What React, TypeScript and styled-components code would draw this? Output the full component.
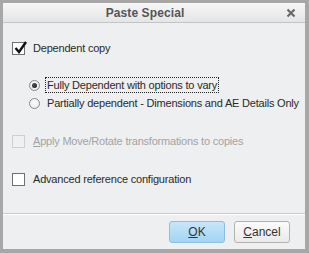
import React, { useState } from 'react'
import styled, { createGlobalStyle, css } from 'styled-components'

const GlobalStyle = createGlobalStyle`
  html, body {
    margin: 0;
    padding: 0;
    background: #a9a9a9;
  }
  * {
    box-sizing: border-box;
  }
`;

const Frame = styled.div`
  width: 309px;
  height: 253px;
  border: 3px solid #a7a7a7;
  border-right-width: 4px;
  border-bottom-width: 4px;
  background: #eeeff0;
  display: flex;
  flex-direction: column;
  font-family: "Liberation Sans", Arial, sans-serif;
  font-size: 11px;
  letter-spacing: -0.2px;
  color: #222;
`;

const TitleBar = styled.div`
  height: 20px;
  flex: none;
  display: flex;
  align-items: center;
  justify-content: center;
  padding-right: 18px;
  position: relative;
  background: linear-gradient(#f6f6f7, #e4e5e6);
  border-bottom: 1px solid #c3c4c6;
`;

const Title = styled.div`
  font-weight: bold;
  font-size: 12px;
  letter-spacing: 0.1px;
  color: #555555;
`;

const CloseButton = styled.div`
  position: absolute;
  right: 9px;
  top: 5px;
  width: 10px;
  height: 10px;
  display: flex;
`;

const Body = styled.div`
  flex: 1;
  display: flex;
  flex-direction: column;
  padding: 16px 0 0 9px;
`;

const Row = styled.label<{ $indent?: number; $gap?: number; $disabled?: boolean }>`
  display: flex;
  align-items: center;
  height: 18px;
  margin-left: ${(p) => p.$indent || 0}px;
  margin-bottom: ${(p) => p.$gap || 0}px;
  color: ${(p) => (p.$disabled ? '#a3a3a3' : '#2a2a2a')};
  cursor: default;
`;

const Box = styled.span<{ $disabled?: boolean }>`
  width: 13px;
  height: 13px;
  flex: none;
  border: 1px solid ${(p) => (p.$disabled ? '#cfcfcf' : '#707070')};
  background: ${(p) => (p.$disabled ? '#f0f0f0' : '#ffffff')};
  margin-right: 7px;
  position: relative;
  display: inline-block;
`;

const Tick = styled.svg`
  position: absolute;
  left: 0px;
  top: -3px;
`;

const Radio = styled.span<{ $on?: boolean }>`
  width: 11px;
  height: 11px;
  flex: none;
  border-radius: 50%;
  border: 1px solid #8a8a8a;
  background: radial-gradient(circle at 50% 40%, #ffffff, #e2e2e2);
  margin-right: 6px;
  display: flex;
  align-items: center;
  justify-content: center;
  &::after {
    content: '';
    width: 5px;
    height: 5px;
    border-radius: 50%;
    background: radial-gradient(circle at 40% 35%, #555, #111);
    display: ${(p) => (p.$on ? 'block' : 'none')};
  }
`;

const Text = styled.span<{ $focus?: boolean }>`
  white-space: nowrap;
  padding: 1px 1px;
  ${(p) =>
    p.$focus &&
    css`
      outline: 1px dotted #222;
      outline-offset: 0px;
    `}
`;

const Mnemonic = styled.span`
  text-decoration: underline;
`;

const Footer = styled.div`
  flex: none;
  height: 36px;
  border-top: 1px solid #c9cacc;
  box-shadow: inset 0 1px 0 #ffffff;
  display: flex;
  justify-content: flex-end;
  align-items: center;
  gap: 9px;
  padding-right: 15px;
`;

const Button = styled.button<{ $primary?: boolean }>`
  width: 56px;
  height: 22px;
  font-family: "Liberation Sans", Arial, sans-serif;
  font-size: 12px;
  color: #333;
  border-radius: 3px;
  border: 1px solid ${(p) => (p.$primary ? '#8cbfe0' : '#b2b2b2')};
  background: ${(p) =>
    p.$primary
      ? 'linear-gradient(#c7e6fa, #a4d4f4)'
      : 'linear-gradient(#fbfbfb, #eaeaea)'};
  padding: 0;
`;

export default function App() {
  const [dependent, setDependent] = useState(true)
  const [mode, setMode] = useState('full')
  const [advanced, setAdvanced] = useState(false)

  return (
    <>
      <GlobalStyle />
      <Frame>
        <TitleBar>
          <Title>Paste Special</Title>
          <CloseButton>
            <svg width="10" height="10" viewBox="0 0 10 10">
              <path d="M1.5 1.5 L8.5 8.5 M8.5 1.5 L1.5 8.5" stroke="#6a6a6a" strokeWidth="2.2" />
            </svg>
          </CloseButton>
        </TitleBar>
        <Body>
          <Row $gap={19} onClick={() => setDependent(!dependent)}>
            <Box>
              {dependent && (
                <Tick width="15" height="15" viewBox="0 0 15 15">
                  <path d="M2.5 8 L6 12 L13 2" fill="none" stroke="#111" strokeWidth="2.4" />
                </Tick>
              )}
            </Box>
            <Text>Dependent copy</Text>
          </Row>
          <Row $indent={17} onClick={() => setMode('full')}>
            <Radio $on={mode === 'full'} />
            <Text $focus>Fully Dependent with options to vary</Text>
          </Row>
          <Row $indent={17} $gap={20} onClick={() => setMode('partial')}>
            <Radio $on={mode === 'partial'} />
            <Text>Partially dependent - Dimensions and AE Details Only</Text>
          </Row>
          <Row $disabled $gap={20}>
            <Box $disabled />
            <Text>
              <Mnemonic>A</Mnemonic>pply Move/Rotate transformations to copies
            </Text>
          </Row>
          <Row onClick={() => setAdvanced(!advanced)}>
            <Box>
              {advanced && (
                <Tick width="15" height="15" viewBox="0 0 15 15">
                  <path d="M2.5 8 L6 12 L13 2" fill="none" stroke="#111" strokeWidth="2.4" />
                </Tick>
              )}
            </Box>
            <Text>Advanced reference configuration</Text>
          </Row>
        </Body>
        <Footer>
          <Button $primary>
            <Mnemonic>O</Mnemonic>K
          </Button>
          <Button>
            <Mnemonic>C</Mnemonic>ancel
          </Button>
        </Footer>
      </Frame>
    </>
  )
}
